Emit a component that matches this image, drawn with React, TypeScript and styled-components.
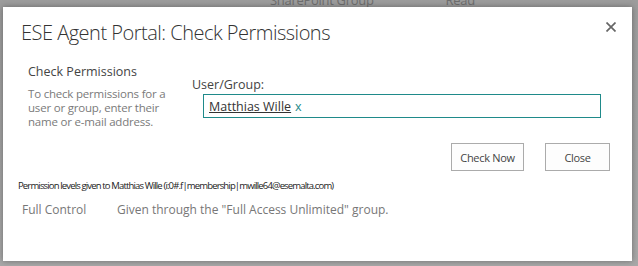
import React from 'react';
import styled, { createGlobalStyle } from 'styled-components';

const GlobalStyle = createGlobalStyle`
  html, body {
    margin: 0;
    padding: 0;
    width: 638px;
    height: 266px;
    overflow: hidden;
    background: #a4a4a4;
    font-family: "Open Sans", "Noto Sans", sans-serif;
  }
`;

const Page = styled.div`
  display: flex;
  flex-direction: column;
  width: 638px;
  height: 266px;
  background: linear-gradient(#9c9c9c, #a8a8a8);
`;

// the dimmed page behind the dialog, only its bottom edge shows
const Backdrop = styled.div`
  height: 7px;
  overflow: hidden;
  display: flex;
  align-items: flex-end;
  padding-left: 270px;
  gap: 72px;
  color: #6e6e6e;
  font-size: 13px;
  line-height: 13px;
  letter-spacing: -0.3px;
`;

const Dialog = styled.div`
  margin-left: 3px;
  width: 629px;
  height: 254px;
  background: #fff;
  box-shadow: 0 0 6px rgba(0, 0, 0, 0.35);
  display: flex;
  flex-direction: column;
`;

const Header = styled.div`
  display: flex;
  justify-content: space-between;
  align-items: flex-start;
  padding: 12px 16px 0 18px;
  height: 40px;
  box-sizing: border-box;
`;

const Title = styled.h1`
  margin: 0;
  font-size: 20px;
  font-weight: 300;
  letter-spacing: -0.5px;
  color: #333;
  line-height: 27px;
`;

const CloseX = styled.button`
  border: 0;
  background: none;
  padding: 0;
  margin-top: 3px;
  width: 10px;
  height: 10px;
  display: flex;
  cursor: pointer;
`;

const Form = styled.div`
  display: flex;
  padding: 16px 0 0 25px;
`;

const Intro = styled.div`
  width: 164px;
`;

const IntroTitle = styled.div`
  font-size: 12.5px;
  color: #444;
  line-height: 17px;
  margin-bottom: 7px;
`;

const IntroText = styled.div`
  font-size: 11.5px;
  color: #7a7a7a;
  line-height: 14px;
  letter-spacing: -0.2px;
  width: 150px;
`;

const Field = styled.div`
  display: flex;
  flex-direction: column;
  padding-top: 13px;
`;

const FieldLabel = styled.label`
  font-size: 12.5px;
  color: #444;
  line-height: 17px;
`;

const PeopleBox = styled.div`
  margin: 1px 0 0 11px;
  width: 398px;
  height: 24px;
  box-sizing: border-box;
  border: 1px solid #1f8a8a;
  display: flex;
  align-items: center;
  padding-left: 5px;
  gap: 4px;
  font-size: 12.5px;
`;

const Person = styled.span`
  color: #333;
  text-decoration: underline;
`;

const Remove = styled.span`
  color: #1f8a8a;
`;

const Actions = styled.div`
  display: flex;
  justify-content: flex-end;
  gap: 21px;
  padding: 14px 22px 0 0;
`;

const Button = styled.button<{ w: number }>`
  width: ${p => p.w}px;
  height: 28px;
  border: 1px solid #ababab;
  background: #fdfdfd;
  color: #444;
  font-family: inherit;
  font-size: 11px;
  letter-spacing: -0.3px;
  padding: 0;
`;

const Result = styled.div`
  padding: 8px 0 0 15px;
  font-size: 9.5px;
  letter-spacing: -0.85px;
  color: #222;
`;

const LevelRow = styled.div`
  display: grid;
  grid-template-columns: 95px auto;
  padding: 9px 0 0 19px;
  font-size: 12px;
  color: #777;
`;

export default function App() {
  return (
    <Page>
      <GlobalStyle />
      <Backdrop>
        <span>SharePoint Group</span>
        <span>Read</span>
      </Backdrop>
      <Dialog>
        <Header>
          <Title>ESE Agent Portal: Check Permissions</Title>
          <CloseX aria-label="Close">
            <svg width="10" height="10" viewBox="0 0 10 10">
              <path d="M0.5 0.5L9.5 9.5M9.5 0.5L0.5 9.5" stroke="#666" strokeWidth="1.7" />
            </svg>
          </CloseX>
        </Header>
        <Form>
          <Intro>
            <IntroTitle>Check Permissions</IntroTitle>
            <IntroText>To check permissions for a user or group, enter their name or e-mail address.</IntroText>
          </Intro>
          <Field>
            <FieldLabel>User/Group:</FieldLabel>
            <PeopleBox>
              <Person>Matthias Wille</Person>
              <Remove>x</Remove>
            </PeopleBox>
          </Field>
        </Form>
        <Actions>
          <Button w={73}>Check Now</Button>
          <Button w={65}>Close</Button>
        </Actions>
        <Result>Permission levels given to Matthias Wille (i:0#.f|membership|mwille64@esemalta.com)</Result>
        <LevelRow>
          <span>Full Control</span>
          <span>Given through the "Full Access Unlimited" group.</span>
        </LevelRow>
      </Dialog>
    </Page>
  );
}
